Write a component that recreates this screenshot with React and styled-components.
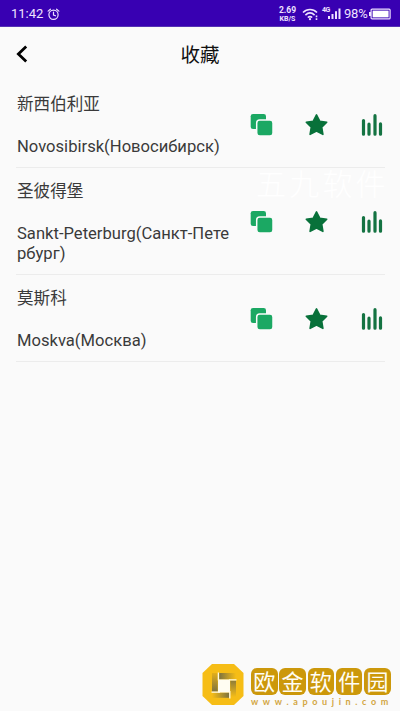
import React from 'react';
import styled, { createGlobalStyle } from 'styled-components';

const GlobalStyle = createGlobalStyle`
  * { box-sizing: border-box; }
  body { margin: 0; background: #fafafa; font-family: Roboto, "Noto Sans CJK SC", sans-serif; }
`;
const Screen = styled.div`
  position: relative;
  width: 400px;
  height: 711px;
  overflow: hidden;
  display: flex;
  flex-direction: column;
  background: #fafafa;
`;
const StatusBar = styled.header`
  height: 27px;
  flex: none;
  display: flex;
  align-items: center;
  padding: 2px 9px 0 11px;
  background: #3800b2;
  color: #eee2ff;
  border-bottom: 1px solid #5532b4;
`;
const Clock = styled.span`
  font-size: 13px;
  line-height: 16px;
  margin-right: 4px;
`;
const Spacer = styled.span`flex: 1;`;
const Speed = styled.span`
  width: 21px;
  display: flex;
  flex-direction: column;
  align-items: center;
  font-weight: 700;
  margin-right: 4px;
  white-space: nowrap;
`;
const SpeedValue = styled.span`
  font-size: 8.5px;
  line-height: 9px;
`;
const SpeedUnit = styled.span`
  font-size: 7px;
  line-height: 8px;
`;
const Percent = styled.span`
  font-size: 13px;
  line-height: 16px;
  width: 25px;
  margin-left: 3px;
  letter-spacing: -0.2px;
`;
const TitleBar = styled.nav`
  height: 54px;
  flex: none;
  display: grid;
  grid-template-columns: 40px 1fr 40px;
  align-items: center;
`;
const BackButton = styled.button`
  display: flex;
  padding: 0 0 0 16px;
  border: 0;
  background: none;
`;
const Title = styled.h1`
  margin: 0;
  padding-top: 3px;
  font-size: 19.5px;
  line-height: 28px;
  font-weight: 400;
  color: #111;
  text-align: center;
`;
const List = styled.main`
  padding: 0 15px 0 16px;
`;
const Row = styled.article`
  display: flex;
  align-items: center;
  border-bottom: 1px solid #ececec;
  padding: 13px 0 10px;
`;
const Names = styled.div`
  width: 218px;
  flex: none;
  padding-left: 1px;
  color: #3a3a3a;
  font-size: 16.6px;
  line-height: 20px;
`;
const ChineseName = styled.div`
  padding-top: 1px;
  margin-bottom: 22px;
`;
const LocalName = styled.div`word-break: break-all;`;
const Actions = styled.div`
  flex: 1;
  display: grid;
  grid-template-columns: 54px 1fr 22px;
  padding: 0 2px 1px 16px;
`;
const Icon = styled.svg`display: block; flex: none;`;
const Watermark = styled.div`
  position: absolute;
  left: 256px;
  top: 165px;
  font-size: 30px;
  line-height: 40px;
  font-weight: 300;
  letter-spacing: 3.2px;
  color: #fff;
  white-space: nowrap;
`;
const Brand = styled.footer`
  position: absolute;
  left: 202px;
  top: 663px;
  display: flex;
  gap: 7px;
`;
const BrandText = styled.div`padding-top: 5px;`;
const Tiles = styled.div`display: flex; gap: 1.8px;`;
const Tile = styled.span`
  width: 26.5px;
  height: 27px;
  border-radius: 6px;
  background: #cc980b;
  color: #fffdf5;
  font: 400 22px/25px "Noto Sans CJK SC", sans-serif;
  text-align: center;
`;
const Site = styled.div`
  margin-top: 1px;
  font: 700 9px/12px Lato, sans-serif;
  letter-spacing: 4.65px;
  color: #d2a642;
  white-space: nowrap;
`;

const AlarmIcon = () => (
  <Icon width="13" height="13" viewBox="0 0 13 13" fill="none" stroke="currentColor" strokeWidth="1.2" strokeLinecap="round">
    <circle cx="6.5" cy="6.8" r="4.6" />
    <path d="M6.5 4v3l2 .8M1.1 3.1 3.4 1.2M11.9 3.1 9.6 1.2" />
  </Icon>
);
const WifiIcon = () => (
  <Icon width="17" height="13" viewBox="0 0 17 13" fill="none" stroke="currentColor" strokeWidth="1.6">
    <path d="M1 4.5C5 .4 11 .4 15 4.5M3.4 7.1c2.8-2.7 6.4-2.7 9.2 0M5.8 9.5c1.4-1.2 3-1.2 4.4 0" />
    <circle cx="8" cy="11.2" r="1.1" fill="currentColor" stroke="none" />
    <path d="M14.5 7.5v1.8M14.5 10.3v1.8" />
  </Icon>
);
const Network = styled.span`
  font-size: 7px;
  line-height: 7px;
  font-weight: 700;
  align-self: flex-start;
  margin: 5px 0 0 3px;
  width: 6px;
  letter-spacing: -0.5px;
`;
const SignalIcon = () => (
  <Icon width="13" height="12" viewBox="0 0 13 12" fill="currentColor">
    <path d="M0 8h2v3H0zM3.5 6h2v5h-2zM7 3.3h2V11H7zM10.5.5h2V11h-2z" />
  </Icon>
);
const BatteryIcon = () => (
  <Icon width="22" height="12" viewBox="0 0 22 12">
    <path d="M0 4h2v4H0z" fill="currentColor" />
    <rect x="2.1" y="1.1" width="19" height="9.8" rx="1" fill="none" stroke="currentColor" strokeWidth="1.2" />
    <rect x="3.6" y="2.6" width="16" height="6.8" fill="#fff" />
  </Icon>
);
const CopyIcon = () => (
  <Icon width="24" height="24" viewBox="0 0 24 24" fill="#1ba863">
    <rect x=".7" y="1" width="15.3" height="15" rx="2.3" />
    <rect x="6.7" y="7" width="16.3" height="16" rx="3" stroke="#fafafa" strokeWidth="1.5" />
  </Icon>
);
const StarIcon = () => (
  <Icon width="24" height="24" viewBox="0 0 24 24" fill="#08713a" stroke="#08713a" strokeWidth="1.6" strokeLinejoin="round">
    <path d="M12.5 1.9 15.7 8.2 22.7 9.2 17.7 14.1 18.9 21.4 12.5 18.1 6.1 21.4 7.3 14.1 2.3 9.2 9.3 8.2Z" />
  </Icon>
);
const ChartIcon = () => (
  <Icon width="22" height="24" viewBox="0 0 22 24" fill="none" stroke="#147342" strokeWidth="3.2" strokeLinecap="round">
    <path d="M2.5 7.6V21.2M8 11.2v10M14 2.7v18.5M19.5 10.9v10.3" />
  </Icon>
);
const LogoIcon = () => (
  <Icon width="42" height="43" viewBox="0 0 42 43">
    <defs>
      <linearGradient id="topArm"><stop stopColor="#7d7340" /><stop offset="1" stopColor="#f6bd16" /></linearGradient>
      <linearGradient id="rightArm" x2="0" y2="1"><stop stopColor="#8d7b3a" /><stop offset="1" stopColor="#f6bd16" /></linearGradient>
      <linearGradient id="bottomArm" x1="1" x2="0"><stop stopColor="#7d7340" /><stop offset="1" stopColor="#f6bd16" /></linearGradient>
      <linearGradient id="leftArm" x1="0" y1="1" x2="0" y2="0"><stop stopColor="#7d7340" /><stop offset="1" stopColor="#e3ae1b" /></linearGradient>
    </defs>
    <path fill="#f6bd16" d="M10 1h22l9.5 9v23L32 42H10L.5 33V10Z" />
    <path fill="#fffdf2" d="M16 16.3h12v13.4H16z" />
    <path fill="url(#leftArm)" d="M10 10h5.7v18.7H10z" />
    <path fill="url(#topArm)" d="M17.2 10H34v6.2H17.2z" />
    <path fill="url(#rightArm)" d="M28.3 17.5H34V34h-5.7z" />
    <path fill="url(#bottomArm)" d="M10 29.8h17.2v5H10z" />
    <path fill="none" stroke="#fffbe6" strokeWidth="1.3" d="M16.4 9.5v8M27 16.9h7.5M27.8 28v7.5M9.5 29.2H18" />
  </Icon>
);

const cities = [
  ['新西伯利亚', 'Novosibirsk(Новосибирск)'],
  ['圣彼得堡', 'Sankt-Peterburg(Санкт-Петербург)'],
  ['莫斯科', 'Moskva(Москва)'],
];

export default function App() {
  return (
    <Screen>
      <GlobalStyle />
      <StatusBar>
        <Clock>11:42</Clock>
        <AlarmIcon />
        <Spacer />
        <Speed>
          <SpeedValue>2.69</SpeedValue>
          <SpeedUnit>KB/S</SpeedUnit>
        </Speed>
        <WifiIcon />
        <Network>4G</Network>
        <SignalIcon />
        <Percent>98%</Percent>
        <BatteryIcon />
      </StatusBar>
      <TitleBar>
        <BackButton aria-label="返回">
          <Icon width="12" height="18" viewBox="0 0 12 18" fill="none" stroke="#000" strokeWidth="2.8">
            <path d="M10.2 1.6 2.4 9l7.8 7.4" />
          </Icon>
        </BackButton>
        <Title>收藏</Title>
      </TitleBar>
      <List>
        {cities.map(([chinese, local]) => (
          <Row key={chinese}>
            <Names>
              <ChineseName>{chinese}</ChineseName>
              <LocalName>{local}</LocalName>
            </Names>
            <Actions><CopyIcon /><StarIcon /><ChartIcon /></Actions>
          </Row>
        ))}
      </List>
      <Watermark>五九软件</Watermark>
      <Brand>
        <LogoIcon />
        <BrandText>
          <Tiles>{[...'欧金软件园'].map((c) => <Tile key={c}>{c}</Tile>)}</Tiles>
          <Site>www.apoujin.com</Site>
        </BrandText>
      </Brand>
    </Screen>
  );
}
